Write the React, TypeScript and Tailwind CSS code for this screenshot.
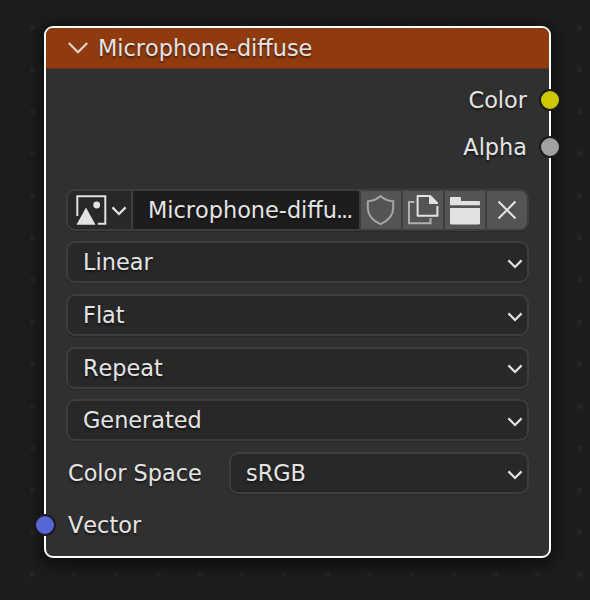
import type { ReactNode } from 'react';

const STEPS = Array.from({ length: 14 }, (_, i) => i * 42.08);

function GridDots() {
  return (
    <svg className="absolute inset-0" width="590" height="600" shapeRendering="crispEdges" aria-hidden="true">
      {STEPS.map((y) =>
        STEPS.map((x) => (
          <rect key={`${x}-${y}`} x={Math.round(30 + x)} y={Math.round(25 + y)} width="5" height="5" fill="#252525" />
        )),
      )}
    </svg>
  );
}

function Chevron() {
  return (
    <svg width="16" height="10" viewBox="0 0 16 10" className="shrink-0" fill="none" stroke="#e2e2e2" strokeWidth="2.2">
      <path d="M1.4 1.4 8 8l6.6-6.6" />
    </svg>
  );
}

function Select({ label }: { label: string }) {
  return (
    <div className="flex h-[42px] flex-1 items-center justify-between rounded-[9px] border-2 border-[#3d3d3d] bg-[#282828] pl-[15px] pr-[4px] shadow-[0_1px_1px_#292929]">
      <span className="leading-[30px]">{label}</span>
      <span className="flex pt-[3px]">
        <Chevron />
      </span>
    </div>
  );
}

function Socket({ className }: { className: string }) {
  return <span className={`absolute h-[22px] w-[22px] rounded-full border-2 border-[#1b1b1b] ${className}`} />;
}

function IconButton({ children, last = false }: { children: ReactNode; last?: boolean }) {
  return (
    <button
      className={`flex h-full w-[40px] items-center justify-center bg-[#545454] ${last ? 'rounded-r-[7px]' : ''}`}
    >
      {children}
    </button>
  );
}

function ImageRow() {
  return (
    <div className="flex h-[42px] gap-[2px] rounded-[9px] border-2 border-[#3d3d3d] bg-[#3d3d3d] shadow-[0_1px_1px_#292929]">
      <button className="flex w-[63px] items-center rounded-l-[7px] bg-[#282828] pl-[8px]">
        <svg width="31" height="30" viewBox="0 0 31 30" fill="none">
          <path d="M1.3 21V1.200h28v27.600h-7.500" stroke="#e2e2e2" strokeWidth="2" />
          <path d="M10 12.500 19.500 29.700H.5z" fill="#e2e2e2" />
          <circle cx="20.700" cy="10" r="3.400" fill="#e2e2e2" />
        </svg>
        <span className="ml-[4px] flex pt-[3px]">
          <Chevron />
        </span>
      </button>
      <div className="flex flex-1 items-center bg-[#1d1d1d] pl-[15px]">
        <span className="whitespace-nowrap leading-[30px]">
          Microphone-diffu<span className="-ml-px tracking-[-2px]">...</span>
        </span>
      </div>
      <IconButton>
        <svg width="30" height="32" viewBox="0 0 30 32" fill="none" stroke="#a5a5a5" strokeWidth="2" strokeLinejoin="round">
          <path d="M14.5 2C11.3 5 6.500 7 1.800 7.200V14c0 6.800 4.500 12.400 12.700 16.200C22.700 26.400 27.200 20.800 27.200 14V7.200C22.500 7 17.700 5 14.500 2Z" />
        </svg>
      </IconButton>
      <IconButton>
        <svg width="32" height="32" viewBox="0 0 32 32" fill="none">
          <path d="M7.500 8H2v21.300h21.500V24" stroke="#b0b0b0" strokeWidth="2" />
          <path d="M22.500 2H10.600v19.800h19.800V12" stroke="#e2e2e2" strokeWidth="2" strokeLinejoin="round" />
          <path d="M22 1h1.500L31 8.500V10h-9z" fill="#e2e2e2" />
        </svg>
      </IconButton>
      <IconButton>
        <svg width="30" height="30" viewBox="0 0 30 30" fill="#e2e2e2">
          <path d="M0 3Q0 2 1 2h9q1 0 1 1v3h18q1 0 1 1v3.300H0zM0 13h30v15q0 1.500-1.500 1.500h-27Q0 29.500 0 28z" />
        </svg>
      </IconButton>
      <IconButton last>
        <svg width="20" height="20" viewBox="0 0 20 20" fill="none" stroke="#e2e2e2" strokeWidth="2.100">
          <path d="m1.500 1.500 17 17m0-17-17 17" />
        </svg>
      </IconButton>
    </div>
  );
}

export default function App() {
  return (
    <main className="relative h-[600px] w-[590px] overflow-hidden bg-[#1d1d1d] pl-[44px] pt-[26px] font-['DejaVu_Sans',sans-serif] text-[22.400px] text-[#e4e4e4] [font-kerning:none] [text-shadow:0_2px_2px_rgba(0,0,0,0.5)]">
      <GridDots />
      <section className="relative flex h-[532px] w-[507px] flex-col rounded-[9px] border-2 border-white bg-[#303030] shadow-[0_4px_18px_3px_rgba(0,0,0,0.6)]">
        <header className="flex h-[41px] items-center rounded-t-[7px] border-b border-[#6c300f] bg-[#8f3b0e] pl-[22px]">
          <svg width="20" height="12" viewBox="0 0 20 12" fill="none" stroke="#e2d5ce" strokeWidth="2.200">
            <path d="M.8 1 10 10.200 19.200 1" />
          </svg>
          <h1 className="ml-[10px] leading-[30px]">Microphone-diffuse</h1>
        </header>
        <div className="flex h-[119.800px] flex-col items-end gap-[17px] pr-[22px] pt-[16px] leading-[30px]">
          <div>Color</div>
          <div>Alpha</div>
        </div>
        <div className="flex flex-col gap-[10.650px] px-[20px]">
          <ImageRow />
          <div className="flex"><Select label="Linear" /></div>
          <div className="flex"><Select label="Flat" /></div>
          <div className="flex"><Select label="Repeat" /></div>
          <div className="flex"><Select label="Generated" /></div>
          <div className="flex items-center">
            <span className="w-[163px] pl-[2px] leading-[30px]">Color Space</span>
            <Select label="sRGB" />
          </div>
          <div className="pl-[2px] pt-[5.300px] leading-[30px]">Vector</div>
        </div>
        <Socket className="-right-[12px] top-[61px] bg-[#cdc800]" />
        <Socket className="-right-[12px] top-[108px] bg-[#a1a1a1]" />
        <Socket className="-left-[12px] top-[486px] bg-[#5865d4]" />
      </section>
    </main>
  );
}
